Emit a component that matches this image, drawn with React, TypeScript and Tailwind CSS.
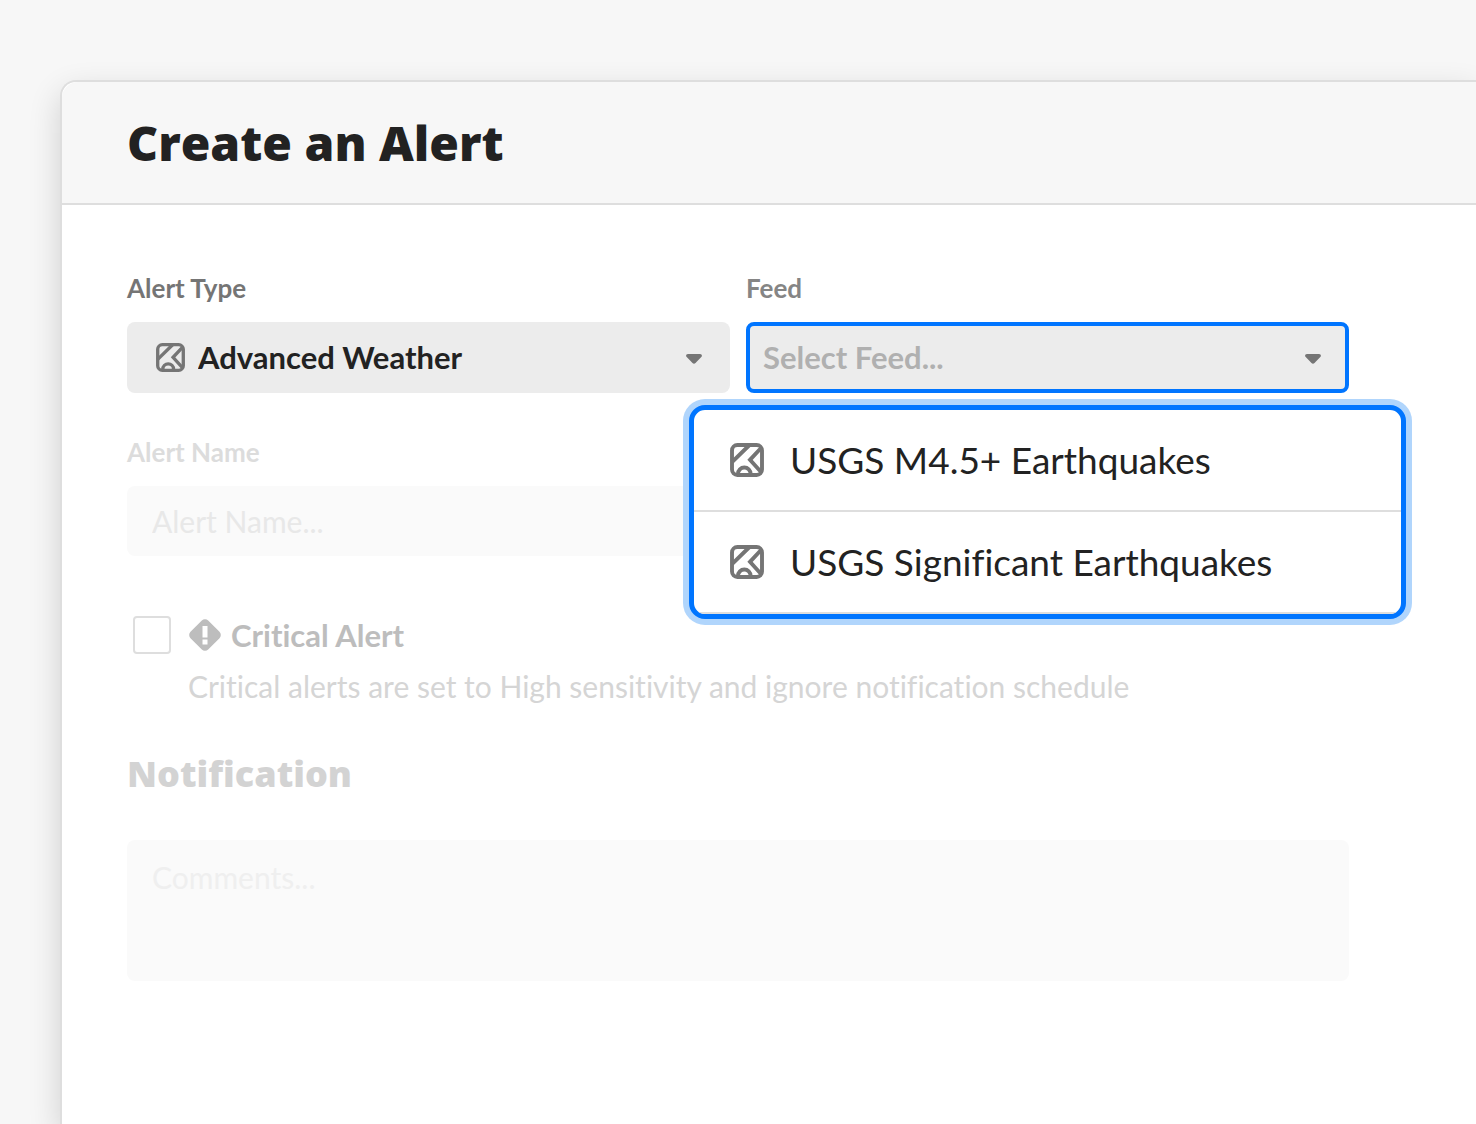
import { useState } from 'react';

const ALERT_TYPES = ['Advanced Weather'];
const FEEDS = ['USGS M4.5+ Earthquakes', 'USGS Significant Earthquakes'];

function MapIcon({ className }: { className?: string }) {
  return (
    <svg viewBox="0 0 34 34" fill="none" stroke="currentColor" strokeWidth="3.9" className={className} aria-hidden="true">
      <rect x="2" y="2" width="30" height="30" rx="5.4" />
      <path d="M2 19.2 19.5 2M31.5 4.5 20 16.8l11.5 12.7" />
      <path d="M8 32v-1.2a6.3 6.3 0 0 1 12.6 0V32" />
    </svg>
  );
}

function CriticalIcon({ className }: { className?: string }) {
  return (
    <svg viewBox="0 0 32 32" className={className} aria-hidden="true">
      <rect x="3.5" y="3.5" width="25" height="25" rx="4.5" fill="currentColor" transform="rotate(45 16 16)" />
      <path d="M13.5 7h5v11.5h-5zM13.5 20.5h5v5h-5z" fill="white" />
    </svg>
  );
}

function Caret() {
  return (
    <svg viewBox="0 0 16 10" className="pointer-events-none absolute right-7 top-8 h-[10px] w-4 text-[#757575]" aria-hidden="true">
      <path d="M2 0h12c1.8 0 2.5 1.9 1.3 3.1L9.5 9c-.9.9-2.1.9-3 0L.7 3.1C-.5 1.9.2 0 2 0z" fill="currentColor" />
    </svg>
  );
}

export default function App() {
  const [feed, setFeed] = useState('');
  const [open, setOpen] = useState(true);

  const pickFeed = (name: string) => {
    setFeed(name);
    setOpen(false);
  };

  return (
    <main className="flex min-h-screen flex-col overflow-hidden bg-[#f7f7f7] pl-15 pt-20 font-['Lato',sans-serif] text-[#222] [font-variant-ligatures:none]">
      <section className="flex-1 rounded-tl-2xl border-l-2 border-t-2 border-[#dedede] bg-white shadow-[0_12px_32px_rgba(0,0,0,0.16)]">
        <header className="rounded-tl-2xl border-b-2 border-[#dedede] bg-[#f7f7f7] px-[65px] py-8">
          <h1 className="font-['Open_Sans',sans-serif] text-5xl font-extrabold leading-[57px]">Create an Alert</h1>
        </header>

        <form className="pb-16 pl-[65px] pr-[127px] pt-[67px]" onSubmit={(e) => e.preventDefault()}>
          <div className="grid grid-cols-2 gap-4">
            <div>
              <label htmlFor="alert-type" className="block text-[26px] font-bold leading-8 text-[#757575]">Alert Type</label>
              <div className="relative mt-[18px]">
                <MapIcon className="pointer-events-none absolute left-[29px] top-[21px] size-[29px] text-[#757575]" />
                <select
                  id="alert-type"
                  className="block h-[71px] w-full appearance-none rounded-lg bg-[#ececec] pl-[71px] pr-16 text-[31px] font-bold outline-none"
                >
                  {ALERT_TYPES.map((type) => <option key={type}>{type}</option>)}
                </select>
                <Caret />
              </div>
            </div>

            <div>
              <label htmlFor="feed" className="block text-[26px] font-bold leading-8 text-[#858585]">Feed</label>
              <div className="relative mt-[18px]">
                <select
                  id="feed"
                  value={feed}
                  onChange={(e) => pickFeed(e.target.value)}
                  onMouseDown={(e) => { e.preventDefault(); setOpen(!open); }}
                  className={`block h-[71px] w-full appearance-none rounded-lg border-4 border-[#0075ff] bg-[#ececec] pl-[13px] pr-16 text-[31px] font-bold outline-none ${feed ? 'text-[#222]' : 'text-[#b0b0b0]'}`}
                >
                  <option value="">Select Feed...</option>
                  {FEEDS.map((name) => <option key={name}>{name}</option>)}
                </select>
                <Caret />

                {open && (
                  <ul className="absolute -left-[57px] -right-[57px] top-[83px] z-10 overflow-hidden rounded-2xl border-5 border-[#0075ff] bg-white ring-6 ring-[#b0d5fc]">
                    {FEEDS.map((name) => (
                      <li key={name} className="border-b-2 border-[#dedede]">
                        <button type="button" onClick={() => pickFeed(name)} className="flex h-[100px] w-full items-center gap-[26px] pl-9 text-left text-[37px]">
                          <MapIcon className="size-[34px] text-[#757575]" />
                          {name}
                        </button>
                      </li>
                    ))}
                  </ul>
                )}
              </div>
            </div>
          </div>

          <div className="mt-[43px]">
            <label htmlFor="alert-name" className="block text-[26px] font-bold leading-8 text-[#dcdcdc]">Alert Name</label>
            <input
              id="alert-name"
              placeholder="Alert Name..."
              className="mt-[18px] block h-[70px] w-full rounded-lg bg-[#fafafa] px-[25px] text-[30px] outline-none placeholder:text-[#e8e8e8]"
            />
          </div>

          <div className="mt-[60px] flex items-center pl-[6px]">
            <input id="critical" type="checkbox" className="size-[38px] appearance-none rounded-sm border-2 border-[#dedede] bg-white checked:bg-[#bdbdbd]" />
            <label htmlFor="critical" className="ml-[18px] flex items-center gap-[10px] text-[31px] font-bold leading-[38px] text-[#bdbdbd]">
              <CriticalIcon className="size-8" />
              Critical Alert
            </label>
          </div>
          <p className="mt-3 pl-[61px] text-[30px] leading-10 text-[#d5d5d5]">
            Critical alerts are set to High sensitivity and ignore notification schedule
          </p>

          <h2 className="mt-11 font-['Open_Sans',sans-serif] text-4xl font-extrabold leading-12 text-[#d3d3d3]">Notification</h2>
          <textarea
            aria-label="Comments"
            placeholder="Comments..."
            className="mt-[42px] block h-[141px] w-full resize-none rounded-lg bg-[#fafafa] px-[25px] py-[17px] text-[30px] leading-10 outline-none placeholder:text-[#efefef]"
          />
        </form>
      </section>
    </main>
  );
}
